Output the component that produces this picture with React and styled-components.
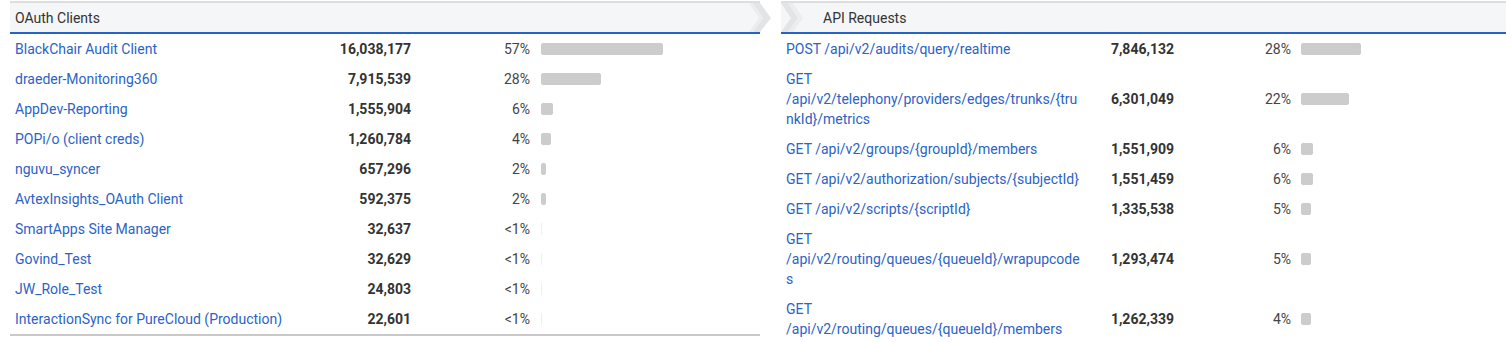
import React from "react";
import styled, { createGlobalStyle } from "styled-components";

const Global = createGlobalStyle`
  html, body { margin: 0; padding: 0; background: #fff; }
  body { font-family: Roboto, "Noto Sans", "Liberation Sans", sans-serif; font-size: 14px; color: #333; }
`;

const Page = styled.div`
  display: flex;
  align-items: flex-start;
  gap: 21px;
  padding: 1px 0 0 10px;
  width: 1506px;
  box-sizing: border-box;
  overflow: hidden;
  height: 342px;
`;

const Panel = styled.section`
  flex: 0 0 ${(p) => p.$width}px;
  width: ${(p) => p.$width}px;
  border-bottom: ${(p) => (p.$bottomBorder ? "2px solid #c8c8c8" : "none")};
`;

const Header = styled.div`
  position: relative;
  height: 29px;
  border-top: 2px solid #dedede;
  border-bottom: 2px solid #2563c4;
  background: #f5f6f7;
  display: flex;
  align-items: center;
  padding-left: ${(p) => p.$indent}px;
  font-size: 14px;
  color: #333;
`;

const ChevronEnd = styled.svg`
  position: absolute;
  right: -11px;
  top: -2px;
`;

const ChevronStart = styled.svg`
  position: absolute;
  left: 0;
  top: -2px;
`;

const Row = styled.div`
  display: grid;
  grid-template-columns: ${(p) => p.$cols};
  align-items: center;
  padding: 5px 0 5px 5px;
  line-height: 20px;
`;

const Name = styled.a`
  color: #2b63c6;
  text-decoration: none;
  overflow-wrap: break-word;
  min-width: 0;
  padding-right: ${(p) => p.$pr || 0}px;
`;

const Count = styled.div`
  text-align: right;
  font-weight: 700;
  color: #333;
`;

const Pct = styled.div`
  text-align: right;
  color: #444;
`;

const BarTrack = styled.div`
  padding-left: ${(p) => p.$gap}px;
  display: flex;
  align-items: center;
`;

const Bar = styled.div`
  height: 12px;
  border-radius: 2px;
  background: ${(p) => (p.$faint ? "#efefef" : "#cccccc")};
`;

const SCALE = 214 / 28100000;

const clients = [
  ["BlackChair Audit Client", 16038177, "57%"],
  ["draeder-Monitoring360", 7915539, "28%"],
  ["AppDev-Reporting", 1555904, "6%"],
  ["POPi/o (client creds)", 1260784, "4%"],
  ["nguvu_syncer", 657296, "2%"],
  ["AvtexInsights_OAuth Client", 592375, "2%"],
  ["SmartApps Site Manager", 32637, "<1%"],
  ["Govind_Test", 32629, "<1%"],
  ["JW_Role_Test", 24803, "<1%"],
  ["InteractionSync for PureCloud (Production)", 22601, "<1%"],
];

const requests = [
  ["POST /api/v2/audits/query/realtime", 7846132, "28%"],
  ["GET /api/v2/telephony/providers/edges/trunks/{trunkId}/metrics", 6301049, "22%"],
  ["GET /api/v2/groups/{groupId}/members", 1551909, "6%"],
  ["GET /api/v2/authorization/subjects/{subjectId}", 1551459, "6%"],
  ["GET /api/v2/scripts/{scriptId}", 1335538, "5%"],
  ["GET /api/v2/routing/queues/{queueId}/wrapupcodes", 1293474, "5%"],
  ["GET /api/v2/routing/queues/{queueId}/members", 1262339, "4%"],
];

const fmt = (n) => n.toLocaleString("en-US");

function DataRow({ name, count, pct, cols, gap, pr }) {
  const w = count * SCALE;
  const faint = w < 1;
  return (
    <Row $cols={cols}>
      <Name href="#" $pr={pr}>{name}</Name>
      <Count>{fmt(count)}</Count>
      <Pct>{pct}</Pct>
      <BarTrack $gap={gap}>
        <Bar $faint={faint} style={{ width: `${Math.max(1, w)}px`, borderRadius: faint ? 0 : undefined }} />
      </BarTrack>
    </Row>
  );
}

export default function App() {
  return (
    <>
      <Global />
      <Page>
        <Panel $width={750} $bottomBorder>
          <Header $indent={5}>
            OAuth Clients
            <ChevronEnd width="22" height="33" viewBox="0 0 22 33">
              <polygon points="0,2 4,2 14,17 4,31 0,31 10,17" fill="#eceded" />
              <polygon points="4,2 11,2 22,17 11,31 4,31 14,17" fill="#e3e4e5" />
            </ChevronEnd>
          </Header>
          {clients.map(([n, c, p]) => (
            <DataRow key={n} name={n} count={c} pct={p} cols="300px 96px 119px 1fr" gap={11} />
          ))}
        </Panel>
        <Panel $width={760}>
          <Header $indent={42}>
            <ChevronStart width="22" height="33" viewBox="0 0 22 33">
              <rect x="0" y="0" width="22" height="2" fill="#dedede" />
              <polygon points="0,2 7,2 17,17 7,31 0,31 10,17" fill="#e3e4e5" />
              <polygon points="7,2 12,2 22,17 12,31 7,31 17,17" fill="#eceded" />
            </ChevronStart>
            API Requests
          </Header>
          {requests.map(([n, c, p]) => (
            <DataRow key={n} name={n} count={c} pct={p} cols="300px 88px 117px 1fr" gap={10} pr={2} />
          ))}
        </Panel>
      </Page>
    </>
  );
}
